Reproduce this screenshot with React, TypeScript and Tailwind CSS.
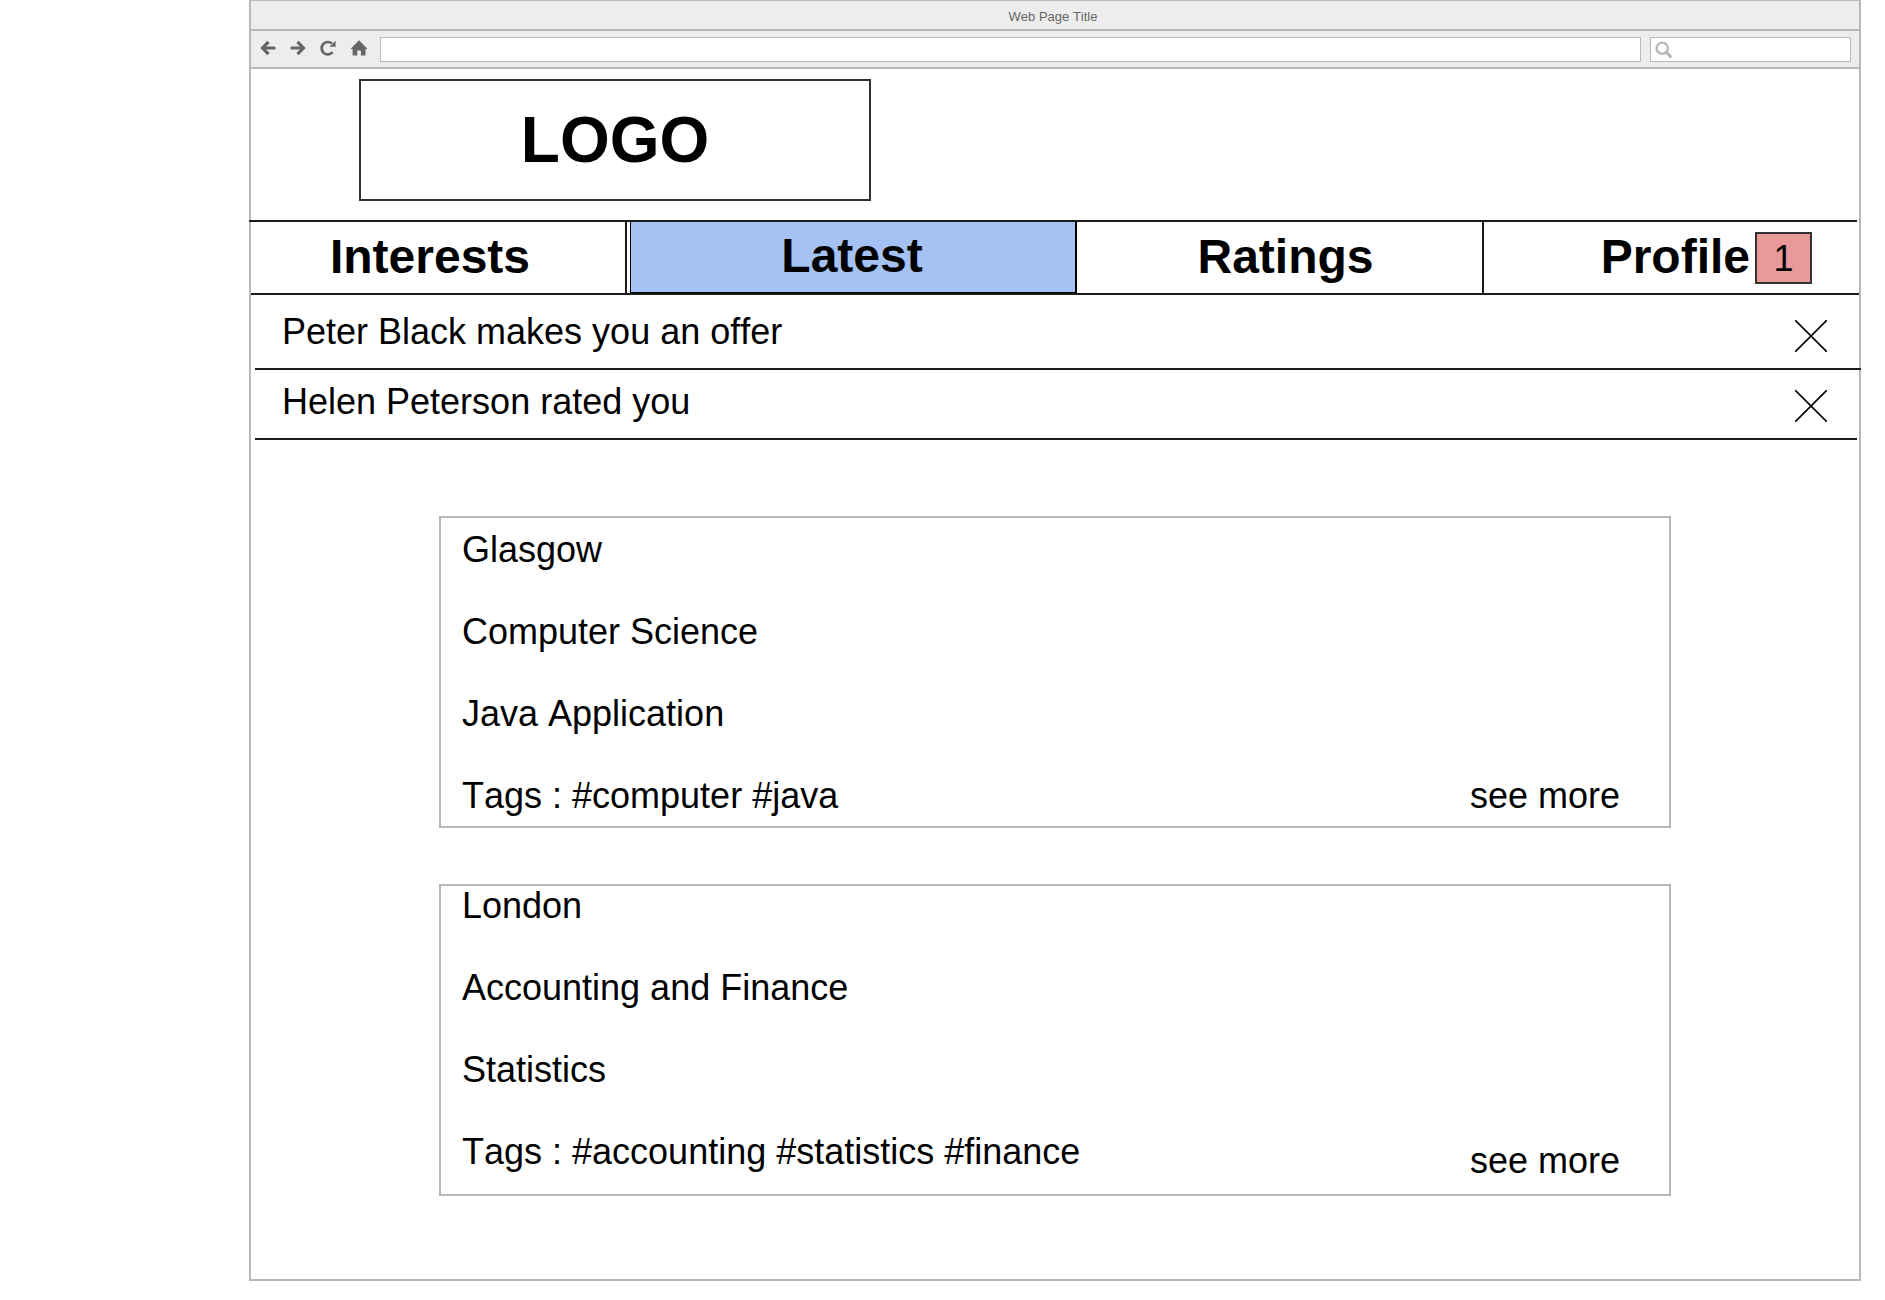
import React from "react";

function BackIcon() {
  return (
    <svg width="16" height="16" viewBox="0 0 16 16" fill="none" stroke="#666" aria-hidden="true">
      <path d="M8.5 1.8 2.5 8l6 6.2" strokeWidth="3.2" />
      <path d="M3 8h11.2" strokeWidth="3" strokeLinecap="round" />
    </svg>
  );
}

function ForwardIcon() {
  return (
    <svg width="16" height="16" viewBox="0 0 16 16" fill="none" stroke="#666" aria-hidden="true">
      <path d="m7.5 1.8 6 6.2-6 6.2" strokeWidth="3.2" />
      <path d="M13 8H1.8" strokeWidth="3" strokeLinecap="round" />
    </svg>
  );
}

function ReloadIcon() {
  return (
    <svg width="16" height="16" viewBox="0 0 16 16" fill="none" aria-hidden="true">
      <path d="M12.6 12.2A6.2 6.2 0 1 1 12 3.6" stroke="#666" strokeWidth="2.7" />
      <path d="M15.6.8v6H9.4z" fill="#666" />
    </svg>
  );
}

function HomeIcon() {
  return (
    <svg width="18" height="16" viewBox="0 0 18 16" fill="#666" aria-hidden="true">
      <path d="M9 .2 17.6 9h-2.1v6.6h-4.6v-5H7.3v5H2.6V9H.4z" />
    </svg>
  );
}

function SearchIcon() {
  return (
    <svg width="18" height="18" viewBox="0 0 18 18" fill="none" stroke="#b8b8b8" aria-hidden="true">
      <circle cx="7.2" cy="7.2" r="5.6" strokeWidth="2.3" />
      <path d="m11.4 11.4 4 4" strokeWidth="3" strokeLinecap="round" />
    </svg>
  );
}

function CloseIcon() {
  return (
    <svg width="32" height="32" viewBox="0 0 32 32" fill="none" stroke="#000" aria-hidden="true">
      <path d="M0 0l32 32M32 0 0 32" strokeWidth="1.6" />
    </svg>
  );
}

function BrowserChrome() {
  return (
    <div className="bg-[#ededed]">
      <div className="border-t border-b-2 border-[#b8b8b8] pt-1 pr-1 text-center text-[13px] leading-6 text-[#666]">
        Web Page Title
      </div>
      <div className="flex items-center border-b-2 border-[#b8b8b8] pt-1.5 pr-2 pb-[5px] pl-[9px]">
        <div className="flex gap-3.5 pb-[3px]">
          <button type="button" aria-label="Back"><BackIcon /></button>
          <button type="button" aria-label="Forward"><ForwardIcon /></button>
          <button type="button" aria-label="Reload"><ReloadIcon /></button>
          <button type="button" aria-label="Home"><HomeIcon /></button>
        </div>
        <input
          aria-label="Address"
          className="ml-3 h-[25px] min-w-0 flex-1 border border-[#b8b8b8] bg-white px-2 text-[13px] outline-none"
        />
        <label className="ml-[9px] flex h-[25px] w-[201px] items-center border border-[#b8b8b8] bg-white pl-1">
          <SearchIcon />
          <input aria-label="Search" className="min-w-0 flex-1 px-1 text-[13px] outline-none" />
        </label>
      </div>
    </div>
  );
}

function Navigation() {
  return (
    <nav>
      <div className="mr-0.5 -ml-0.5 h-0.5 bg-[#1c1c1c]" />
      <div className="grid h-[71px] grid-cols-[379fr_447fr_407fr_375fr] text-5xl leading-[54px] font-bold">
        <a href="#interests" className="mr-[3px] flex items-center justify-center border-r-2 border-[#1c1c1c] pr-4 pb-0.5">
          Interests
        </a>
        <a
          href="#latest"
          aria-current="page"
          className="flex items-center justify-center border-r-2 border-b border-l border-black bg-[#a4c2f4] pr-0.5 pb-0.5"
        >
          Latest
        </a>
        <a href="#ratings" className="flex items-center justify-center border-r-2 border-[#1c1c1c] pb-0.5 pl-3">
          Ratings
        </a>
        <a href="#profile" className="flex items-center justify-end pr-[47px]">
          <span className="pb-0.5">Profile</span>
          <span className="ml-[5px] flex h-[52px] w-[57px] items-center justify-center border-2 border-[#333] bg-[#ea9999] pt-0.5 text-4xl font-normal">
            1
          </span>
        </a>
      </div>
      <div className="h-0.5 bg-[#1c1c1c]" />
    </nav>
  );
}

const notifications = ["Peter Black makes you an offer", "Helen Peterson rated you"];

function Notifications() {
  return (
    <ul className="ml-1">
      {notifications.map((text, i) => (
        <li
          key={text}
          className={
            "flex items-center justify-between border-b-2 border-[#1c1c1c] pl-[27px] " +
            (i === 0 ? "-mr-0.5 pt-[17px] pr-[34px] pb-3" : "mr-0.5 pt-3 pr-[30px] pb-3")
          }
        >
          <span className="pb-1 text-4xl leading-10">{text}</span>
          <button type="button" className="pt-1" aria-label={"Dismiss: " + text}>
            <CloseIcon />
          </button>
        </li>
      ))}
    </ul>
  );
}

function Card({ lines, spacing, morePadding }: { lines: string[]; spacing: string; morePadding: string }) {
  return (
    <article
      className={
        "flex h-[312px] items-end justify-between border-2 border-[#b8b8b8] pr-[49px] pl-[21px] text-4xl leading-10 " + morePadding
      }
    >
      <div className={"flex flex-col gap-[42px] self-start " + spacing}>
        {lines.map((line) => (
          <p key={line}>{line}</p>
        ))}
      </div>
      <a href="#details">see more</a>
    </article>
  );
}

export default function App() {
  return (
    <div className="bg-white font-['Liberation_Sans',Arial,sans-serif] text-black [font-kerning:none]">
      <div className="mr-6 ml-[249px] border-x-2 border-b-2 border-[#b8b8b8]">
        <BrowserChrome />
        <header className="pt-2.5 pb-[19px] pl-[108px]">
          <h1 className="flex h-[122px] w-[512px] items-center justify-center border-2 border-[#333] text-[64px] leading-[72px] font-bold">
            LOGO
          </h1>
        </header>
        <Navigation />
        <Notifications />
        <main className="flex flex-col gap-14 px-[188px] pt-[76px] pb-[83px]">
          <Card
            lines={["Glasgow", "Computer Science", "Java Application", "Tags : #computer #java"]}
            spacing="pt-3"
            morePadding="pb-2.5"
          />
          <Card
            lines={["London", "Accounting and Finance", "Statistics", "Tags : #accounting #statistics #finance"]}
            spacing="pt-0"
            morePadding="pb-[13px]"
          />
        </main>
      </div>
    </div>
  );
}
